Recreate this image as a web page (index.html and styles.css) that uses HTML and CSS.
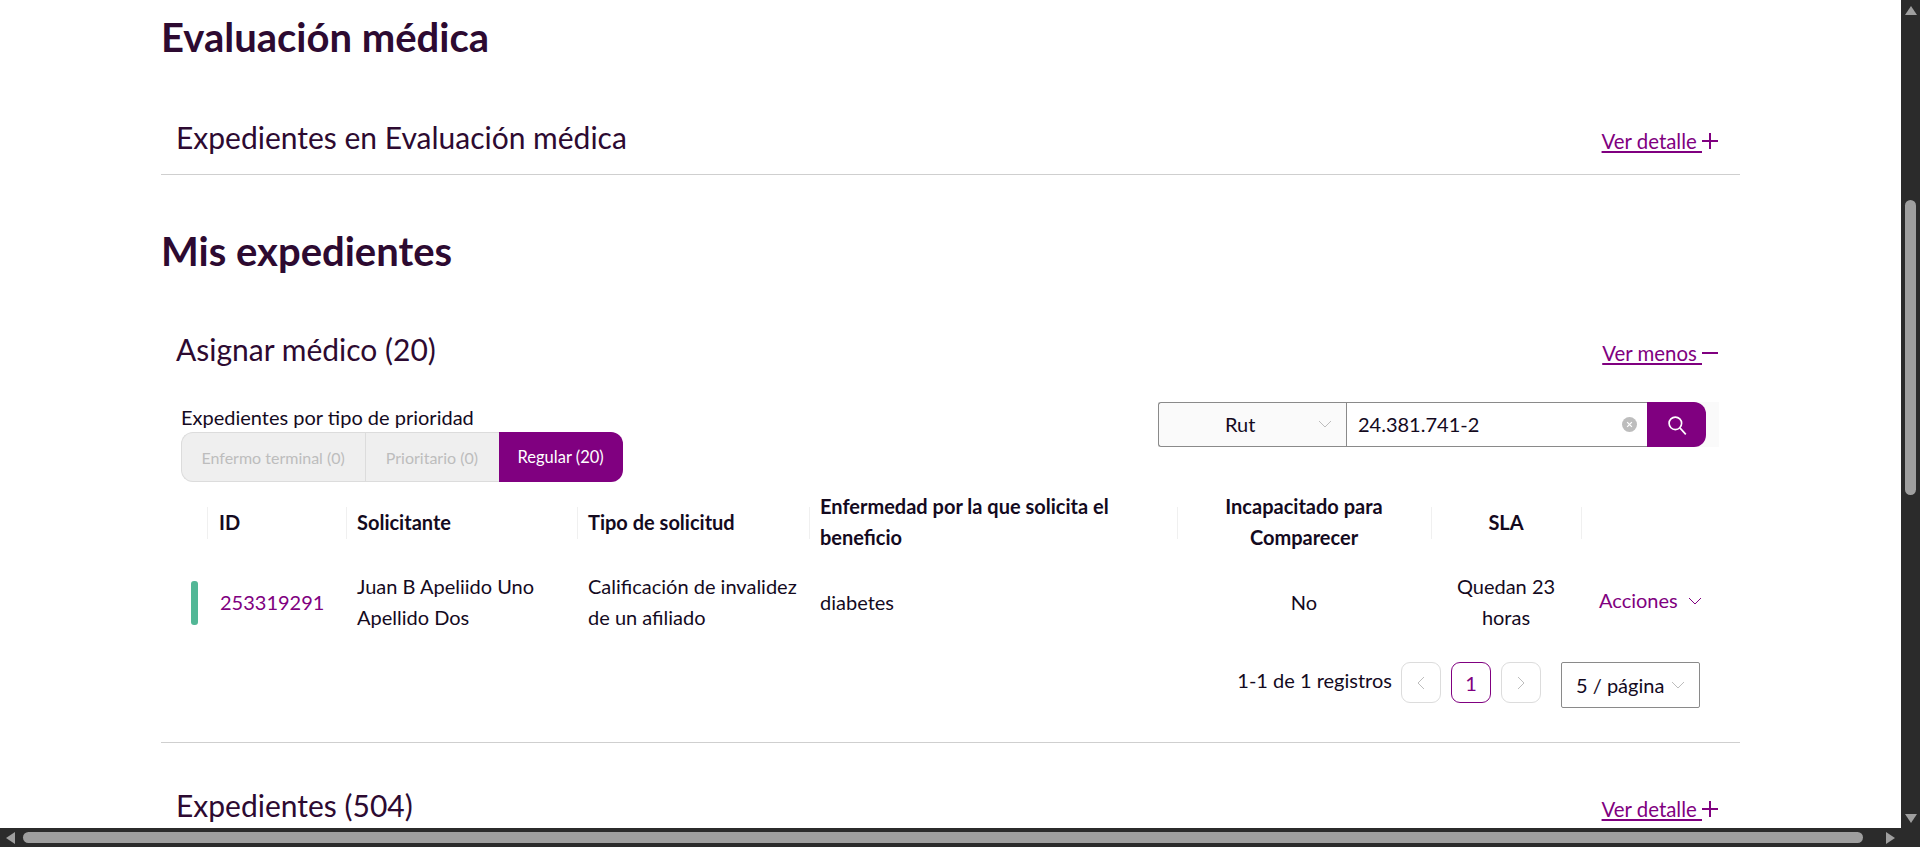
FILE: index.html
```html
<!DOCTYPE html>
<html lang="es">
<head>
    <meta charset="UTF-8">
    <title>Evaluación médica</title>
    <link rel="stylesheet" href="styles.css">
</head>
<body>
<div class="window">
    <main class="page">
        <h1 class="page-title">Evaluación médica</h1>
        <section class="panel panel-closed">
            <div class="panel-head">
                <h2>Expedientes en Evaluación médica</h2>
                <a class="toggle" href="#"><span>Ver detalle </span>
                    <svg viewBox="0 0 16 16"><path d="M0 8h16M8 0v16"/></svg>
                </a>
            </div>
        </section>

        <h1 class="page-title second">Mis expedientes</h1>
        <section class="panel panel-open">
            <div class="panel-head">
                <h2>Asignar médico (20)</h2>
                <a class="toggle" href="#"><span>Ver menos </span>
                    <svg viewBox="0 0 16 16"><path d="M0 8h16"/></svg>
                </a>
            </div>

            <div class="filters">
                <div class="priority">
                    <p class="priority-label">Expedientes por tipo de prioridad</p>
                    <div class="tabs">
                        <button class="tab">Enfermo terminal (0)</button>
                        <button class="tab">Prioritario (0)</button>
                        <button class="tab tab-active">Regular (20)</button>
                    </div>
                </div>
                <div class="search">
                    <div class="search-type">
                        <span>Rut</span>
                        <svg class="chevron" viewBox="0 0 14 8"><path d="M1 1l6 6 6-6"/></svg>
                    </div>
                    <div class="search-input">
                        <span>24.381.741-2</span>
                        <svg class="clear" viewBox="0 0 14 14"><circle cx="7" cy="7" r="7"/><path d="M4.8 4.8l4.4 4.4M9.2 4.8l-4.4 4.4"/></svg>
                    </div>
                    <button class="search-btn">
                        <svg viewBox="0 0 20 20"><circle cx="8.5" cy="8.5" r="5.7"/><path d="M12.6 12.6l5.4 5.9"/></svg>
                    </button>
                </div>
            </div>

            <table class="cases">
                <colgroup>
                    <col class="c-mark"><col class="c-id"><col class="c-name"><col class="c-type">
                    <col class="c-illness"><col class="c-unable"><col class="c-sla"><col class="c-actions">
                </colgroup>
                <thead>
                    <tr>
                        <th></th>
                        <th class="id-head">ID</th>
                        <th>Solicitante</th>
                        <th>Tipo de solicitud</th>
                        <th>Enfermedad por la que solicita el beneficio</th>
                        <th class="center">Incapacitado para Comparecer</th>
                        <th class="center">SLA</th>
                        <th></th>
                    </tr>
                </thead>
                <tbody>
                    <tr>
                        <td class="mark-cell"><span class="mark"></span></td>
                        <td><a class="case-id" href="#">253319291</a></td>
                        <td>Juan B Apeliido Uno Apellido Dos</td>
                        <td>Calificación de invalidez de un afiliado</td>
                        <td>diabetes</td>
                        <td class="center">No</td>
                        <td class="center">Quedan 23 horas</td>
                        <td>
                            <a class="actions" href="#">Acciones
                                <svg class="chevron" viewBox="0 0 14 8"><path d="M1 1l6 6 6-6"/></svg>
                            </a>
                        </td>
                    </tr>
                </tbody>
            </table>

            <div class="pager">
                <span class="pager-total">1-1 de 1 registros</span>
                <button class="page-btn">
                    <svg viewBox="0 0 8 14"><path d="M7 1L1 7l6 6"/></svg>
                </button>
                <button class="page-btn page-current">1</button>
                <button class="page-btn">
                    <svg viewBox="0 0 8 14"><path d="M1 1l6 6-6 6"/></svg>
                </button>
                <div class="page-size">
                    <span>5 / página</span>
                    <svg class="chevron" viewBox="0 0 14 8"><path d="M1 1l6 6 6-6"/></svg>
                </div>
            </div>
        </section>

        <section class="panel">
            <div class="panel-head">
                <h2>Expedientes (504)</h2>
                <a class="toggle" href="#"><span>Ver detalle </span>
                    <svg viewBox="0 0 16 16"><path d="M0 8h16M8 0v16"/></svg>
                </a>
            </div>
        </section>
    </main>

    <!-- scrollbars of the browser window -->
    <div class="vbar">
        <i class="arrow arrow-up"></i>
        <div class="vbar-track"><div class="vbar-thumb"></div></div>
        <i class="arrow arrow-down"></i>
    </div>
    <div class="hbar">
        <i class="arrow arrow-left"></i>
        <div class="hbar-track"><div class="hbar-thumb"></div></div>
        <i class="arrow arrow-right"></i>
    </div>
</div>
</body>
</html>
```

FILE: styles.css
```css
/* Global */
html, body {
    height: 100%;
    margin: 0;
    overflow: hidden;
}

body {
    font-family: Lato, "Liberation Sans", sans-serif;
    font-size: 20px;
    color: #140a1e;
    background: #fff;
}

a {
    color: #800080;
}

svg {
    display: block;
    fill: none;
    stroke: currentColor;
}

button {
    font-family: inherit;
    cursor: pointer;
}

/* Window + scrollbars */
.window {
    display: grid;
    grid-template-columns: 1fr 19px;
    grid-template-rows: 1fr 19px;
    height: 100vh;
}

.page {
    overflow: hidden;
    padding: 15px 161px 0;
    min-width: 0;
}

.vbar {
    grid-column: 2;
    grid-row: 1;
    background: #2b2b2b;
    display: flex;
    flex-direction: column;
    align-items: center;
}

.vbar-track {
    flex: 1;
    width: 100%;
    padding-top: 185px;
    box-sizing: border-box;
}

.vbar-thumb {
    width: 11px;
    height: 295px;
    margin-left: 4px;
    border-radius: 6px;
    background: #9f9f9f;
}

.hbar {
    grid-column: 1 / 3;
    grid-row: 2;
    background: #2b2b2b;
    display: flex;
    align-items: center;
    padding: 0 25px 0 6px;
}

.hbar-track {
    flex: 1;
    padding: 0 23px 0 8px;
}

.hbar-thumb {
    height: 11px;
    border-radius: 6px;
    background: #9f9f9f;
}

.arrow {
    display: block;
    width: 0;
    height: 0;
    border-style: solid;
    border-color: transparent;
}

.arrow-up {
    margin-top: 6px;
    border-width: 0 6px 9px;
    border-bottom-color: #9f9f9f;
}

.arrow-down {
    margin-bottom: 5px;
    border-width: 9px 6px 0;
    border-top-color: #9f9f9f;
}

.arrow-left {
    border-width: 6px 9px 6px 0;
    border-right-color: #9f9f9f;
}

.arrow-right {
    border-width: 6px 0 6px 9px;
    border-left-color: #9f9f9f;
}

/* Headings */
.page-title {
    margin: 0 0 43px;
    font-size: 40px;
    line-height: 44px;
    font-weight: 700;
    color: #2d0a31;
}

.page-title.second {
    margin: 54px 0 41px;
}

/* Collapsible panels */
.panel-closed {
    border-bottom: 1px solid #cfcfcf;
}

.panel-open {
    border-bottom: 1px solid #cfcfcf;
    padding-bottom: 34px;
}

.panel-head {
    display: flex;
    justify-content: space-between;
    align-items: center;
    height: 72px;
    padding: 0 22px 0 15px;
}

.panel-head h2 {
    margin: 0 0 3px;
    font-size: 30px;
    font-weight: 400;
    color: #2d0a31;
}

.panel + .panel {
    margin-top: 27px;
}

.toggle {
    display: flex;
    align-items: center;
    margin-top: 6px;
    font-size: 20.4px;
}

.toggle span {
    white-space: pre;
}

.toggle svg {
    width: 16px;
    height: 16px;
    stroke-width: 2;
}

/* Priority + search */
.filters {
    display: flex;
    justify-content: space-between;
    margin-top: 16px;
    padding: 0 21px 0 20px;
}

.priority-label {
    margin: 3px 0 3px;
    font-size: 20px;
    line-height: 24px;
}

.tabs {
    display: flex;
    height: 50px;
}

.tab {
    padding: 0 20.5px 0 19.5px;
    border: 1px solid #dcdcdc;
    border-right: 0;
    background: #efefef;
    color: #bdbdbd;
    font-size: 16px;
}

.tab:first-child {
    border-radius: 12px 0 0 12px;
}

.tab-active {
    border: 0;
    border-radius: 0 12px 12px 0;
    padding: 0 19px;
    background: #800080;
    color: #fff;
    font-size: 16.5px;
}

.search {
    display: flex;
    width: 561px;
    height: 45px;
    background: #fafafa;
}

.search-type {
    display: flex;
    align-items: center;
    justify-content: space-between;
    box-sizing: border-box;
    width: 188px;
    border: 1px solid #8a8a8a;
    border-right: 0;
    border-radius: 3px 0 0 3px;
    background: #fafafa;
    padding: 0 14px 2px 66px;
}

.search-input {
    display: flex;
    align-items: center;
    justify-content: space-between;
    box-sizing: border-box;
    width: 301px;
    border: 1px solid #8a8a8a;
    border-right: 0;
    background: #fff;
    padding: 0 10px 0 11px;
}

.search-input span {
    padding-bottom: 2px;
}

.clear {
    width: 15px;
    height: 15px;
    color: #fff;
    stroke-width: 1.2;
}

.clear circle {
    fill: #bdbdbd;
    stroke: none;
}

.search-btn {
    width: 59px;
    border: 0;
    padding: 0;
    border-radius: 0 12px 12px 0;
    background: #800080;
    color: #fff;
}

.search-btn svg {
    width: 22px;
    height: 22px;
    margin: 0 auto;
    stroke-width: 1.5;
}

.chevron {
    width: 14px;
    height: 8px;
    color: #bdbdbd;
}

/* Table */
.cases {
    width: 1532px;
    margin: 9px 0 0 29px;
    border-collapse: collapse;
    table-layout: fixed;
    line-height: 31px;
}

.c-mark { width: 17px; }
.c-id { width: 139px; }
.c-name { width: 231px; }
.c-type { width: 232px; }
.c-illness { width: 368px; }
.c-unable { width: 254px; }
.c-sla { width: 150px; }
.c-actions { width: 141px; }

.cases th {
    position: relative;
    height: 62px;
    padding: 0 11px;
    font-weight: 700;
    text-align: left;
}

.cases .id-head {
    padding-left: 12px;
}

.cases th + th::before {
    content: "";
    position: absolute;
    left: 0;
    top: 16px;
    width: 1px;
    height: 32px;
    background: #f0f0f0;
}

.cases td {
    box-sizing: border-box;
    height: 100px;
    padding: 0 11px 2px;
}

.cases .center {
    text-align: center;
}

.cases .mark-cell {
    padding: 0;
}

.mark {
    display: block;
    width: 7px;
    height: 44px;
    margin-left: 1px;
    border-radius: 3px;
    background: #52b796;
}

.case-id {
    padding-left: 2px;
    text-decoration: none;
}

.actions {
    display: flex;
    align-items: center;
    gap: 10px;
    padding: 0 0 3px 7px;
    text-decoration: none;
}

.actions .chevron {
    color: #800080;
}

/* Pagination */
.pager {
    display: flex;
    align-items: flex-start;
    justify-content: flex-end;
    margin-top: 9px;
    padding-right: 40px;
}

.pager-total {
    margin-right: 9px;
    line-height: 36px;
}

.page-btn {
    width: 40px;
    height: 41px;
    margin-right: 10px;
    padding: 0;
    border: 1px solid #dcdcdc;
    border-radius: 9px;
    background: #fff;
    color: #bdbdbd;
}

.page-btn svg {
    width: 8px;
    height: 14px;
    margin: 0 auto;
}

.page-current {
    border-color: #800080;
    color: #800080;
    font-size: 20px;
}

.page-size {
    display: flex;
    align-items: center;
    justify-content: space-between;
    box-sizing: border-box;
    width: 139px;
    height: 46px;
    margin-left: 10px;
    padding: 0 14px;
    border: 1px solid #8a8a8a;
    border-radius: 2px;
}
```
